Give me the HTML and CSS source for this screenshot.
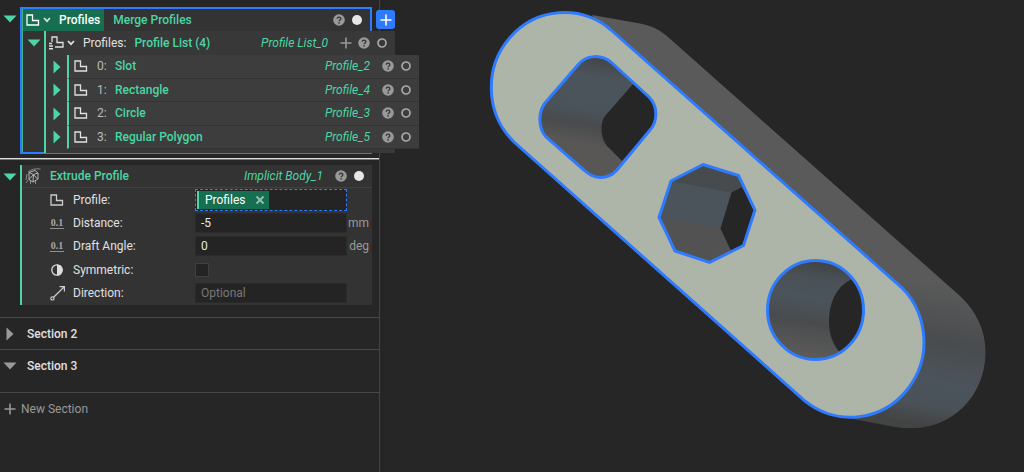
FILE: index.html
```html
<!DOCTYPE html>
<html lang="en">
<head>
    <meta charset="UTF-8">
    <title>Extrude Profile</title>
    <link rel="stylesheet" href="styles.css">
</head>
<body>
    <!-- Shared icons -->
    <svg class="sprite" aria-hidden="true">
        <symbol id="profile" viewBox="0 0 14 12">
            <path d="M1 1H6.5V6.5H12.5V11H1Z" fill="none" stroke="currentColor" stroke-width="1.3"/>
        </symbol>
        <symbol id="profile-list" viewBox="0 0 17 14">
            <path d="M4 6V1H9V6.5H15V11H7" fill="none" stroke="currentColor" stroke-width="1.3"/>
            <path d="M1 7.5H4M1 10H5M1 12.7H5" stroke="currentColor" stroke-width="1.5"/>
        </symbol>
        <symbol id="chevron" viewBox="0 0 8 6">
            <path d="M1 1L4 4.2L7 1" fill="none" stroke="currentColor" stroke-width="1.7"/>
        </symbol>
        <symbol id="down" viewBox="0 0 14 8"><path d="M0.5 0.5H13.5L7 7.5Z" fill="currentColor"/></symbol>
        <symbol id="right" viewBox="0 0 8 14"><path d="M0.5 0.5V13.5L7.5 7Z" fill="currentColor"/></symbol>
        <symbol id="help" viewBox="0 0 12 12">
            <circle cx="6" cy="6" r="5.8" fill="#999"/>
            <path d="M4.3 4.8C4.3 2.6 7.8 2.6 7.8 4.7C7.8 6 6.1 5.9 6.1 7.3" fill="none" stroke="#333" stroke-width="1.3"/>
            <rect x="5.4" y="8.2" width="1.4" height="1.4" fill="#333"/>
        </symbol>
        <symbol id="dot" viewBox="0 0 12 12"><circle cx="6" cy="6" r="5" fill="#e6e6e6"/></symbol>
        <symbol id="ring" viewBox="0 0 12 12"><circle cx="6" cy="6" r="4" fill="none" stroke="#a8a8a8" stroke-width="1.7"/></symbol>
        <symbol id="plus" viewBox="0 0 12 12"><path d="M6 0.5V11.5M0.5 6H11.5" stroke="currentColor" stroke-width="1.6"/></symbol>
    </svg>

    <div class="app">
        <aside class="sidebar">
            <section class="section first">
                <div class="node">
                    <button class="toggle" aria-label="Collapse Profiles"><svg width="14" height="8"><use href="#down"/></svg></button>
                    <div class="block selected">
                        <div class="head">
                            <button class="tab active">
                                <svg width="14" height="12"><use href="#profile"/></svg>
                                <svg class="chev" width="8" height="6"><use href="#chevron"/></svg>
                                <span>Profiles</span>
                            </button>
                            <button class="tab">Merge Profiles</button>
                            <div class="tools">
                                <button aria-label="Help"><svg width="12" height="12"><use href="#help"/></svg></button>
                                <button aria-label="Visibility"><svg width="12" height="12"><use href="#dot"/></svg></button>
                            </div>
                        </div>
                        <button class="add" aria-label="Add"><svg width="12" height="12"><use href="#plus"/></svg></button>

                        <div class="node nested">
                            <button class="toggle" aria-label="Collapse list"><svg width="14" height="8"><use href="#down"/></svg></button>
                            <div class="block list">
                                <div class="head">
                                    <svg width="17" height="14"><use href="#profile-list"/></svg>
                                    <svg class="chev" width="8" height="6"><use href="#chevron"/></svg>
                                    <span class="key">Profiles:</span>
                                    <span class="name">Profile List (4)</span>
                                    <em class="var">Profile List_0</em>
                                    <div class="tools">
                                        <button class="gray" aria-label="Add item"><svg width="12" height="12"><use href="#plus"/></svg></button>
                                        <button aria-label="Help"><svg width="12" height="12"><use href="#help"/></svg></button>
                                        <button aria-label="Visibility"><svg width="12" height="12"><use href="#ring"/></svg></button>
                                    </div>
                                </div>
                                <div class="items">
                                    <div class="item">
                                        <button class="toggle" aria-label="Expand Slot"><svg width="8" height="14"><use href="#right"/></svg></button>
                                        <div class="row">
                                            <svg width="14" height="12"><use href="#profile"/></svg>
                                            <span class="index">0:</span><span class="name">Slot</span><em class="var">Profile_2</em>
                                            <div class="tools">
                                                <button aria-label="Help"><svg width="12" height="12"><use href="#help"/></svg></button>
                                                <button aria-label="Visibility"><svg width="12" height="12"><use href="#ring"/></svg></button>
                                            </div>
                                        </div>
                                    </div>
                                    <div class="item">
                                        <button class="toggle" aria-label="Expand Rectangle"><svg width="8" height="14"><use href="#right"/></svg></button>
                                        <div class="row">
                                            <svg width="14" height="12"><use href="#profile"/></svg>
                                            <span class="index">1:</span><span class="name">Rectangle</span><em class="var">Profile_4</em>
                                            <div class="tools">
                                                <button aria-label="Help"><svg width="12" height="12"><use href="#help"/></svg></button>
                                                <button aria-label="Visibility"><svg width="12" height="12"><use href="#ring"/></svg></button>
                                            </div>
                                        </div>
                                    </div>
                                    <div class="item">
                                        <button class="toggle" aria-label="Expand Circle"><svg width="8" height="14"><use href="#right"/></svg></button>
                                        <div class="row">
                                            <svg width="14" height="12"><use href="#profile"/></svg>
                                            <span class="index">2:</span><span class="name">Circle</span><em class="var">Profile_3</em>
                                            <div class="tools">
                                                <button aria-label="Help"><svg width="12" height="12"><use href="#help"/></svg></button>
                                                <button aria-label="Visibility"><svg width="12" height="12"><use href="#ring"/></svg></button>
                                            </div>
                                        </div>
                                    </div>
                                    <div class="item">
                                        <button class="toggle" aria-label="Expand Regular Polygon"><svg width="8" height="14"><use href="#right"/></svg></button>
                                        <div class="row">
                                            <svg width="14" height="12"><use href="#profile"/></svg>
                                            <span class="index">3:</span><span class="name">Regular Polygon</span><em class="var">Profile_5</em>
                                            <div class="tools">
                                                <button aria-label="Help"><svg width="12" height="12"><use href="#help"/></svg></button>
                                                <button aria-label="Visibility"><svg width="12" height="12"><use href="#ring"/></svg></button>
                                            </div>
                                        </div>
                                    </div>
                                </div>
                            </div>
                        </div>
                    </div>
                </div>

                <div class="insert-line"></div>

                <div class="node">
                    <button class="toggle" aria-label="Collapse Extrude Profile"><svg width="14" height="8"><use href="#down"/></svg></button>
                    <div class="block extrude">
                        <div class="head">
                            <svg width="17" height="17" viewBox="0 0 17 17" fill="none" stroke="#b5b5b5">
                                <path d="M4 4.5L10 2.5L13 5V11L8 14L4 11.5ZM4 4.5L8.5 6.5L13 5M8.5 6.5L8 14M4 11.5L8.5 6.5L12.5 11"/>
                                <path d="M3 4Q8 0 15.5 1M2 6L1 12M1 15L3 12M5.5 16V13M10.5 16V13" stroke="#8c8c8c"/>
                            </svg>
                            <span class="name">Extrude Profile</span>
                            <em class="var">Implicit Body_1</em>
                            <div class="tools">
                                <button aria-label="Help"><svg width="12" height="12"><use href="#help"/></svg></button>
                                <button aria-label="Visibility"><svg width="12" height="12"><use href="#dot"/></svg></button>
                            </div>
                        </div>
                        <div class="fields">
                            <div class="field">
                                <svg width="14" height="12"><use href="#profile"/></svg>
                                <span>Profile:</span>
                                <div class="drop"><span class="chip">Profiles
                                    <button aria-label="Remove Profiles"><svg width="10" height="10" viewBox="0 0 10 10"><path d="M1.5 1.5L8.5 8.5M8.5 1.5L1.5 8.5" stroke="#8fc4ae" stroke-width="1.8"/></svg></button></span></div>
                            </div>
                            <div class="field">
                                <span class="scalar">0.1</span>
                                <label for="distance">Distance:</label>
                                <input type="text" id="distance" value="-5">
                                <span class="unit">mm</span>
                            </div>
                            <div class="field">
                                <span class="scalar">0.1</span>
                                <label for="draft">Draft Angle:</label>
                                <input type="text" id="draft" value="0">
                                <span class="unit">deg</span>
                            </div>
                            <div class="field">
                                <svg width="14" height="14" viewBox="0 0 14 14"><circle cx="7" cy="7" r="5.2" fill="none" stroke="#ddd" stroke-width="1.3"/><path d="M7 1.5A5.5 5.5 0 0 1 7 12.5Z" fill="#ddd"/></svg>
                                <label for="symmetric">Symmetric:</label>
                                <input type="checkbox" id="symmetric">
                            </div>
                            <div class="field">
                                <svg width="16" height="16" viewBox="0 0 16 16" fill="none" stroke="#ccc" stroke-width="1.2"><circle cx="2.4" cy="13.4" r="1.6"/><path d="M3.6 12.2L14 2M9.5 1.6H14.4V6.5"/></svg>
                                <label for="direction">Direction:</label>
                                <input type="text" id="direction" placeholder="Optional">
                            </div>
                        </div>
                    </div>
                </div>
            </section>

            <section class="section">
                <div class="section-head">
                    <button class="toggle" aria-label="Expand Section 2"><svg width="8" height="14"><use href="#right"/></svg></button>
                    <span>Section 2</span>
                </div>
            </section>
            <section class="section open">
                <div class="section-head">
                    <button class="toggle" aria-label="Collapse Section 3"><svg width="14" height="8"><use href="#down"/></svg></button>
                    <span>Section 3</span>
                </div>
            </section>
            <button class="new-section"><svg width="12" height="12"><use href="#plus"/></svg>New Section</button>
        </aside>

        <main class="viewport">
            <svg viewBox="380 0 644 472" preserveAspectRatio="xMinYMin meet" role="img" aria-label="Extruded slot with three holes">
                <defs>
                    <linearGradient id="side" gradientUnits="userSpaceOnUse" x1="950" y1="285" x2="926" y2="426">
                        <stop offset="0" stop-color="#5a5a5a"/>
                        <stop offset="0.4" stop-color="#494c4e"/>
                        <stop offset="0.68" stop-color="#4b535b"/>
                        <stop offset="0.86" stop-color="#4a5157"/>
                        <stop offset="1" stop-color="#424343"/>
                    </linearGradient>
                    <linearGradient id="square-wall" gradientUnits="userSpaceOnUse" x1="606" y1="57" x2="590" y2="150">
                        <stop offset="0" stop-color="#424547"/>
                        <stop offset="0.22" stop-color="#4b535b"/>
                        <stop offset="0.58" stop-color="#4a525a"/>
                        <stop offset="0.75" stop-color="#494b4c"/>
                        <stop offset="0.95" stop-color="#585756"/>
                    </linearGradient>
                    <linearGradient id="circle-wall" gradientUnits="userSpaceOnUse" x1="824" y1="260" x2="807" y2="358">
                        <stop offset="0" stop-color="#404243"/>
                        <stop offset="0.2" stop-color="#4a5157"/>
                        <stop offset="0.4" stop-color="#4b535b"/>
                        <stop offset="0.65" stop-color="#494c4e"/>
                        <stop offset="0.95" stop-color="#5a5958"/>
                    </linearGradient>
                </defs>
                <!-- body behind the front face -->
                <path fill="url(#side)" d="M592 15L640 23.5C652 26 660 30 668 37L960 296C976 311 985.5 330 985.5 352C985.5 396 952 428 913 428C907 428 900 428 895 427L853 419L700 250Z"/>
                <path class="face" d="M611 30L896 282.5A73 75 0 0 1 805 401L514 142A73 75 0 0 1 611 30Z"/>

                <!-- rounded rectangle -->
                <path fill="url(#square-wall)" d="M577 66L545 103C538 112 538 128 546 137L584 170C594 180 608 180 617 170L650 130C658 121 658 106 649 97L612 63C602 54 586 54 577 66Z"/>
                <path class="through" d="M633 84L605 116C600 122 600 138 607 146L622 161L650 130C658 121 658 106 649 97Z"/>
                <path class="edge" d="M577 66L545 103C538 112 538 128 546 137L584 170C594 180 608 180 617 170L650 130C658 121 658 106 649 97L612 63C602 54 586 54 577 66Z"/>

                <!-- polygon -->
                <path fill="#4b535b" d="M703 164.5L738.5 175.5L755 210L743.5 245.5L709.5 262.5L675 251L659 217.5L671 181Z"/>
                <path fill="#474b4d" d="M703 164.5L738.5 175.5L742 187L731.5 192.5L671 181Z"/>
                <path fill="#525252" d="M659 217.5L720.5 228.5L731 251L709.5 262.5L675 251Z"/>
                <path class="through" d="M742 187L731.5 192.5L720.5 228.5L731 251L743.5 245.5L755 210Z"/>
                <path class="edge" d="M703 164.5L738.5 175.5L755 210L743.5 245.5L709.5 262.5L675 251L659 217.5L671 181Z"/>

                <!-- circle -->
                <ellipse cx="815.5" cy="310" rx="48" ry="49.5" fill="url(#circle-wall)"/>
                <path class="through" d="M851 279.5C836 287 829 303 829 321C829 333 832 343 839 351.5C868 338 872 300 851 279.5Z"/>
                <ellipse class="edge" cx="815.5" cy="310" rx="48" ry="49.5"/>
            </svg>
        </main>
    </div>
</body>
</html>
```
FILE: styles.css
```css
* {
    box-sizing: border-box;
}
body {
    margin: 0;
    background-color: #262626;
    color: #e0e0e0;
    font-family: Roboto, "Liberation Sans", sans-serif;
    font-size: 12px;
    line-height: 16px;
}
button {
    display: flex;
    align-items: center;
    margin: 0;
    padding: 0;
    border: 0;
    background: none;
    color: inherit;
    font: inherit;
}
svg {
    display: block;
    flex: none;
}
.sprite {
    position: absolute;
    width: 0;
    height: 0;
}
.app {
    display: grid;
    grid-template-columns: 380px 1fr;
    min-height: 100vh;
    border-bottom: 1px solid #1c1c1c;
}

/* sidebar */
.sidebar {
    position: relative;
    z-index: 1;
    border-right: 1px solid #444;
}
.section {
    border-bottom: 1px solid #484848;
}
.section.first {
    padding: 7px 0 12px;
}
.node {
    display: grid;
    grid-template-columns: 20px 1fr;
    margin-right: 7px;
    color: #4bd6a4;
}
.toggle {
    justify-content: center;
    height: 23px;
}
.block {
    position: relative;
    background-color: #333;
    border-left: 2px solid #4bd6a4;
}
.head {
    display: flex;
    align-items: center;
    height: 22px;
}
.selected {
    border: 2px solid #2f7bff;
    box-shadow: inset 1px 0 #3fae88;
    padding-left: 1px;
}
.tab {
    height: 22px;
    padding: 0 9px;
    color: #4bd6a4;
    font-weight: 500;
}
.tab.active {
    padding: 0 4px 0 3px;
    background-color: #166f50;
    color: #fff;
}
.chev {
    margin: 0 8px 0 3px;
    color: #e0e0e0;
}
.add {
    position: absolute;
    top: 1px;
    right: -25px;
    justify-content: center;
    width: 19px;
    height: 19px;
    border-radius: 3px;
    background-color: #2f7bff;
    color: #fff;
}
.tools {
    display: flex;
    gap: 6px;
    margin-left: auto;
    padding-right: 7px;
}
.var + .tools {
    margin-left: 0;
}
.gray {
    color: #999;
}
.name {
    font-weight: 500;
}
.var {
    margin-left: auto;
    padding-right: 12px;
}
.nested {
    grid-template-columns: 21px 1fr;
    margin: 0 -25px -1px 0;
}
.list {
    background-color: #383838;
    padding-bottom: 4px;
}
.list .head {
    height: 24px;
    padding-left: 2px;
    color: #e0e0e0;
}
.list .name,
.list .var {
    color: #4bd6a4;
}
.list .chev {
    margin-left: 2px;
}
.key {
    margin-right: 8px;
}
.items {
    display: grid;
    grid-auto-rows: 1fr;
    min-height: 94px;
    margin-right: -24px;
}
.item {
    display: grid;
    grid-template-columns: 21px 1fr;
}
.row {
    display: flex;
    align-items: center;
    padding-left: 5px;
    border-left: 2px solid #4bd6a4;
    border-bottom: 1px solid #343434;
    background-color: #3d3d3d;
    color: #e0e0e0;
}
.index {
    width: 18px;
    margin-left: 9px;
    color: #bbb;
}
.insert-line {
    height: 2px;
    margin: 4px 0 5px;
    background-color: #ddd;
    border-bottom: 1px solid #777;
}

/* extrude block */
.extrude .head {
    height: 23px;
    padding-left: 3px;
    border-bottom: 1px solid #404040;
}
.extrude .name {
    margin-left: 8px;
}
.fields {
    display: grid;
    grid-auto-rows: 1fr;
    min-height: 117px;
    color: #e0e0e0;
}
.field {
    display: grid;
    grid-template-columns: 23px 122px 152px 1fr;
    align-items: center;
    padding-left: 28px;
}
.field svg {
    color: #ccc;
}
.scalar {
    width: 14px;
    border-bottom: 1px solid #909090;
    color: #a8a8a8;
    font: bold 10px/11px "Liberation Serif", serif;
    text-align: center;
}
.field input[type="text"] {
    width: 100%;
    height: 20px;
    padding: 0 5px;
    border: 1px solid #2b2b2b;
    background-color: #242424;
    color: #e8e8e8;
    font: inherit;
}
.field input::placeholder {
    color: #777;
}
.field input[type="checkbox"] {
    appearance: none;
    width: 14px;
    height: 14px;
    margin: 0;
    border: 1px solid #404040;
    background-color: #242424;
}
.drop {
    height: 22px;
    padding: 1px;
    border: 1px dashed #2f7bff;
    background-color: #242424;
}
.chip {
    display: flex;
    align-items: center;
    gap: 9px;
    width: max-content;
    height: 18px;
    padding: 0 4px 0 6px;
    border-left: 2px solid #4bd6a4;
    background-color: #166f50;
    color: #fff;
}
.unit {
    padding-right: 3px;
    color: #999;
    text-align: right;
}

/* other sections */
.section-head {
    display: grid;
    grid-template-columns: 20px 1fr;
    align-items: center;
    gap: 7px;
    height: 31px;
    font-weight: 500;
}
.section .section-head .toggle {
    color: #999;
}
.section.open {
    padding-bottom: 11px;
}
.new-section {
    gap: 5px;
    height: 32px;
    padding-left: 4px;
    color: #999;
}

/* 3D view */
.viewport svg {
    width: 100%;
}
.face {
    fill: #adb5a9;
    stroke: #2f7bff;
    stroke-width: 3;
}
.edge {
    fill: none;
    stroke: #2f7bff;
    stroke-width: 3;
}
.through {
    fill: #262626;
}
```
